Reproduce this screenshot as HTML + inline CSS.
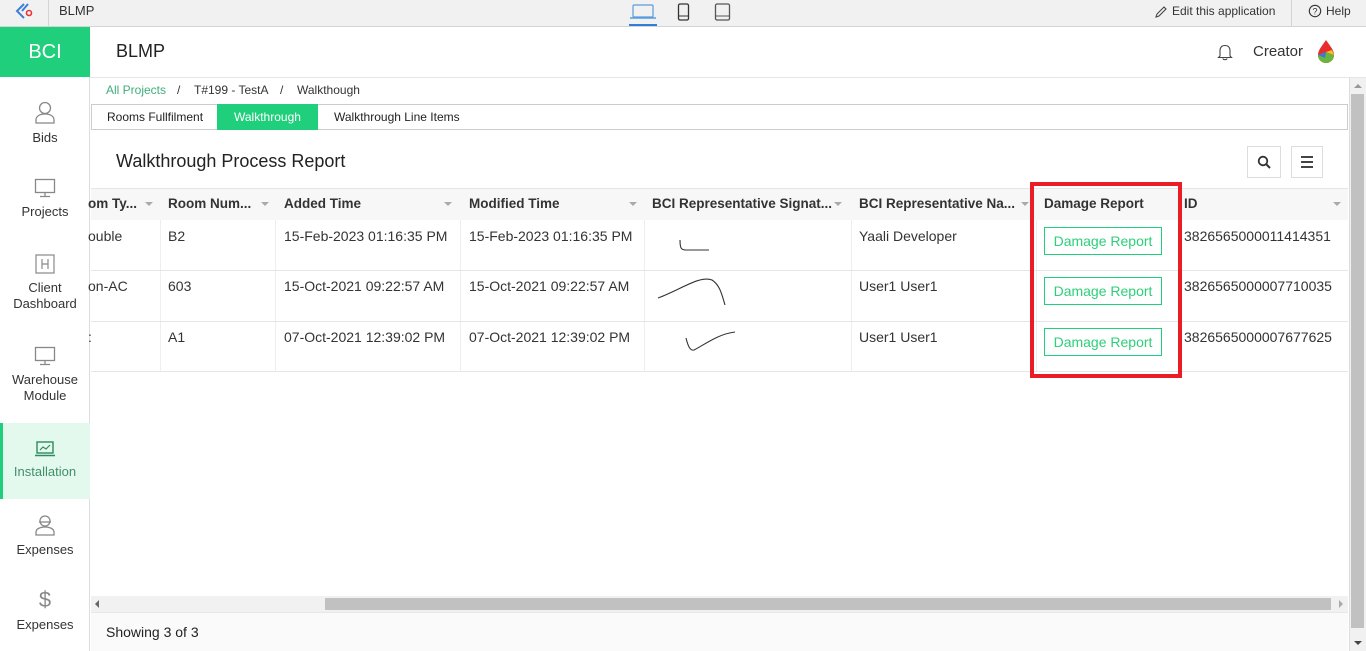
<!DOCTYPE html>
<html><head><meta charset="utf-8">
<style>
*{box-sizing:border-box;margin:0;padding:0}
body{width:1366px;height:651px;overflow:hidden;font-family:"Liberation Sans",sans-serif;background:#fff;position:relative;color:#222}
.abs{position:absolute}
.top{left:0;top:0;width:1366px;height:27px;background:#f1f1f1;border-bottom:1px solid #d4d4d4}
.side{left:0;top:27px;width:90px;height:624px;background:#fff;border-right:1px solid #ddd}
.bci{left:0;top:27px;width:90px;height:50px;background:#20cf7c;color:#fff;font-size:20px;text-align:center;line-height:50px}
.nav{position:absolute;left:0;width:90px;text-align:center;font-size:13px;color:#333;line-height:16px}
.nav svg{display:block;margin:0 auto 6px}
.hdr{left:90px;top:27px;width:1276px;height:51px;background:#fff;border-bottom:1px solid #e6e6e6}
.t{font-size:13px;white-space:nowrap;position:absolute}
.th{font-size:13.5px;color:#333;font-weight:bold;position:absolute;top:196px;white-space:nowrap}
.td{font-size:14px;color:#333;position:absolute;white-space:nowrap}
.arr{position:absolute;top:202px;width:0;height:0;border-left:4px solid transparent;border-right:4px solid transparent;border-top:4px solid #aaa}
.btn{position:absolute;left:1044px;width:118px;height:28px;border:1px solid #20cf7c;color:#2dcf7a;font-size:14px;text-align:center;line-height:26px;background:#fff}
.vl{position:absolute;top:220px;height:151px;width:1px;background:#eee}
.hl{position:absolute;left:91px;width:1257px;height:1px;background:#e6e6e6}
</style></head><body>
<div class="abs top"></div>
<svg class="abs" style="left:14px;top:2px" width="22" height="20" viewBox="0 0 22 20"><path d="M10 2 L3 9 L10 16" fill="none" stroke="#3d7fd8" stroke-width="2"/><path d="M14 2 L8 9" fill="none" stroke="#3d7fd8" stroke-width="2"/><circle cx="15" cy="11" r="2.5" fill="none" stroke="#e33" stroke-width="1.6"/></svg>
<div class="abs" style="left:48px;top:0;width:1px;height:26px;background:#d4d4d4"></div>
<div class="t" style="left:59px;top:3px;color:#333;font-size:13px">BLMP</div>
<svg class="abs" style="left:629px;top:4px" width="28" height="16" viewBox="0 0 28 16"><rect x="4" y="1" width="20" height="12" rx="1" fill="none" stroke="#5a9be0" stroke-width="1.2"/><path d="M1 14 H27" stroke="#5a9be0" stroke-width="1.5"/></svg>
<div class="abs" style="left:629px;top:24px;width:28px;height:2px;background:#2f7fd6"></div>
<svg class="abs" style="left:677px;top:3px" width="14" height="18"><rect x="1.5" y="1" width="10" height="16" rx="1.5" fill="none" stroke="#333" stroke-width="1.3"/><path d="M2 13 H11" stroke="#333"/></svg>
<svg class="abs" style="left:714px;top:3px" width="18" height="18"><rect x="1.5" y="1" width="14" height="16" rx="1.5" fill="none" stroke="#555" stroke-width="1.3"/><path d="M2 13 H15" stroke="#555"/></svg>
<svg class="abs" style="left:1154px;top:5px" width="14" height="14"><path d="M2 12 L3 9 L10 2 L12 4 L5 11 Z" fill="none" stroke="#444" stroke-width="1.1"/></svg>
<div class="t" style="left:1172px;top:4px;color:#333;font-size:12px">Edit this application</div>
<div class="abs" style="left:1291px;top:0;width:1px;height:26px;background:#d4d4d4"></div>
<svg class="abs" style="left:1308px;top:4px" width="14" height="14"><circle cx="7" cy="7" r="5.7" fill="none" stroke="#333" stroke-width="1.1"/><text x="7" y="10.5" font-size="9" text-anchor="middle" fill="#333" font-family="Liberation Sans">?</text></svg>
<div class="t" style="left:1326px;top:4px;color:#333;font-size:12px">Help</div>

<div class="abs side"></div>
<div class="abs bci">BCI</div>
<div class="nav" style="top:100px"><svg width="22" height="24" viewBox="0 0 22 24"><circle cx="11" cy="8" r="5.5" fill="none" stroke="#888" stroke-width="1.3"/><path d="M2 23 V20 C2 16 6 14 11 14 C16 14 20 16 20 20 V23 Z" fill="none" stroke="#888" stroke-width="1.3"/></svg>Bids</div>
<div class="nav" style="top:178px"><svg width="22" height="20"><rect x="1.5" y="1.5" width="19" height="13" fill="none" stroke="#888" stroke-width="1.3"/><path d="M11 14 V18 M6 18.5 H16" stroke="#888" stroke-width="1.3"/></svg>Projects</div>
<div class="nav" style="top:254px"><svg width="20" height="20"><rect x="1" y="1" width="18" height="18" fill="none" stroke="#888" stroke-width="1.2"/><path d="M7 5 V15 M13 5 V15 M7 10 H13" stroke="#888" stroke-width="1.2"/></svg>Client<br>Dashboard</div>
<div class="nav" style="top:346px"><svg width="22" height="20"><rect x="1.5" y="1.5" width="19" height="13" fill="none" stroke="#888" stroke-width="1.3"/><path d="M11 14 V18 M6 18.5 H16" stroke="#888" stroke-width="1.3"/></svg>Warehouse<br>Module</div>
<div class="abs" style="left:0;top:423px;width:90px;height:76px;background:#e4f9ee"></div>
<div class="abs" style="left:0;top:423px;width:3px;height:76px;background:#20cf7c"></div>
<div class="nav" style="top:440px;color:#3f8f6a"><svg width="22" height="18"><rect x="3" y="2" width="16" height="11" fill="none" stroke="#2f8a5c" stroke-width="1.4"/><path d="M1 15.5 H21" stroke="#2f8a5c" stroke-width="1.6"/><path d="M6 10 L9 7 L12 9 L16 5" fill="none" stroke="#2f8a5c" stroke-width="1.2"/></svg>Installation</div>
<div class="nav" style="top:514px"><svg width="22" height="22"><circle cx="11" cy="7" r="5" fill="none" stroke="#888" stroke-width="1.3"/><path d="M5 8 H17" stroke="#888" stroke-width="1.3"/><path d="M2 21 V18 C2 15 6 13 11 13 C16 13 20 15 20 18 V21 Z" fill="none" stroke="#888" stroke-width="1.3"/></svg>Expenses</div>
<div class="nav" style="top:589px"><div style="font-size:22px;color:#888;line-height:22px;margin-bottom:6px">$</div>Expenses</div>

<div class="abs hdr"></div>
<div class="t" style="left:116px;top:41px;font-size:18px;color:#222">BLMP</div>
<svg class="abs" style="left:1216px;top:43px" width="18" height="18"><path d="M4 13 V8 C4 4 6 2.5 9 2.5 C12 2.5 14 4 14 8 V13 L15.5 14.5 H2.5 Z M7 15.5 C7 17 11 17 11 15.5" fill="none" stroke="#444" stroke-width="1.1"/></svg>
<div class="t" style="left:1253px;top:43px;font-size:15px;color:#333">Creator</div>
<svg class="abs" style="left:1316px;top:39px" width="20" height="26" viewBox="0 0 20 26"><path d="M10 1 C6 7 2 11 2 16 C2 21 6 24 10 24 C14 24 18 21 18 16 C18 11 14 7 10 1Z" fill="#e82b2b"/><path d="M2 16 C2 21 6 24 10 24 C14 24 18 21 18 16 L10 13Z" fill="#6ab440"/><path d="M2 16 L10 13 L9 19 Z" fill="#3d79d1"/><path d="M10 13 L18 16 L16 11 Z" fill="#f5c02b"/></svg>

<div class="t" style="left:106px;top:83px;color:#3fae7b;font-size:12px">All Projects</div>
<div class="t" style="left:177px;top:83px;color:#333;font-size:12px">/</div>
<div class="t" style="left:194px;top:83px;color:#333;font-size:12px">T#199 - TestA</div>
<div class="t" style="left:280px;top:83px;color:#333;font-size:12px">/</div>
<div class="t" style="left:297px;top:83px;color:#333;font-size:12px">Walkthough</div>

<div class="abs" style="left:91px;top:104px;width:1257px;height:26px;border:1px solid #ccc;background:#fff"></div>
<div class="t" style="left:107px;top:110px;font-size:12px;color:#222">Rooms Fullfilment</div>
<div class="abs" style="left:217px;top:104px;width:101px;height:26px;background:#20cf7c"></div>
<div class="t" style="left:234px;top:110px;font-size:12px;color:#fff">Walkthrough</div>
<div class="t" style="left:334px;top:110px;font-size:12px;color:#222">Walkthrough Line Items</div>

<div class="t" style="left:116px;top:151px;font-size:18px;color:#222">Walkthrough Process Report</div>
<div class="abs" style="left:1247px;top:146px;width:34px;height:32px;border:1px solid #ddd"></div>
<svg class="abs" style="left:1257px;top:155px" width="14" height="14"><circle cx="6" cy="6" r="4.3" fill="none" stroke="#333" stroke-width="1.8"/><path d="M9 9 L13 13" stroke="#333" stroke-width="2"/></svg>
<div class="abs" style="left:1291px;top:146px;width:32px;height:32px;border:1px solid #ddd"></div>
<div class="abs" style="left:1301px;top:156px;width:12px;height:2px;background:#444"></div>
<div class="abs" style="left:1301px;top:161px;width:12px;height:2px;background:#444"></div>
<div class="abs" style="left:1301px;top:166px;width:12px;height:2px;background:#444"></div>

<div class="abs" style="left:91px;top:188px;width:1257px;height:32px;background:#f7f7f7;border-top:1px solid #e6e6e6"></div>
<div class="th" style="left:88px">om Ty...</div><div class="arr" style="left:145px"></div>
<div class="th" style="left:168px">Room Num...</div><div class="arr" style="left:261px"></div>
<div class="th" style="left:284px">Added Time</div><div class="arr" style="left:444px"></div>
<div class="th" style="left:469px">Modified Time</div><div class="arr" style="left:629px"></div>
<div class="th" style="left:652px">BCI Representative Signat...</div><div class="arr" style="left:834px"></div>
<div class="th" style="left:859px">BCI Representative Na...</div><div class="arr" style="left:1021px"></div>
<div class="th" style="left:1044px">Damage Report</div>
<div class="th" style="left:1184px">ID</div><div class="arr" style="left:1333px"></div>

<div class="vl" style="left:160px"></div><div class="vl" style="left:275px"></div><div class="vl" style="left:460px"></div><div class="vl" style="left:644px"></div><div class="vl" style="left:851px"></div><div class="vl" style="left:1036px"></div>
<div class="hl" style="top:270px"></div><div class="hl" style="top:321px"></div><div class="hl" style="top:371px"></div>

<div class="td" style="left:88px;top:228px">ouble</div>
<div class="td" style="left:168px;top:228px">B2</div>
<div class="td" style="left:284px;top:228px">15-Feb-2023 01:16:35 PM</div>
<div class="td" style="left:469px;top:228px">15-Feb-2023 01:16:35 PM</div>
<div class="td" style="left:859px;top:228px">Yaali Developer</div>
<div class="td" style="left:1184px;top:228px">3826565000011414351</div>
<div class="td" style="left:88px;top:278px">on-AC</div>
<div class="td" style="left:168px;top:278px">603</div>
<div class="td" style="left:284px;top:278px">15-Oct-2021 09:22:57 AM</div>
<div class="td" style="left:469px;top:278px">15-Oct-2021 09:22:57 AM</div>
<div class="td" style="left:859px;top:278px">User1 User1</div>
<div class="td" style="left:1184px;top:278px">3826565000007710035</div>
<div class="td" style="left:88px;top:329px">:</div>
<div class="td" style="left:168px;top:329px">A1</div>
<div class="td" style="left:284px;top:329px">07-Oct-2021 12:39:02 PM</div>
<div class="td" style="left:469px;top:329px">07-Oct-2021 12:39:02 PM</div>
<div class="td" style="left:859px;top:329px">User1 User1</div>
<div class="td" style="left:1184px;top:329px">3826565000007677625</div>

<svg class="abs" style="left:640px;top:220px" width="120" height="151"><path d="M40 20 C40 28 41 30 46 30 L69 30" fill="none" stroke="#333" stroke-width="1.1"/><path d="M18 78 C40 70 60 55 72 60 C80 65 82 75 85 85" fill="none" stroke="#333" stroke-width="1.1"/><path d="M46 118 C48 126 50 131 54 130 C64 125 78 114 95 112" fill="none" stroke="#333" stroke-width="1.1"/></svg>

<div class="btn" style="top:227px">Damage Report</div>
<div class="btn" style="top:277px">Damage Report</div>
<div class="btn" style="top:328px">Damage Report</div>
<div class="abs" style="left:1030px;top:182px;width:152px;height:196px;border:4px solid #e81d25"></div>

<div class="abs" style="left:91px;top:596px;width:1257px;height:16px;background:#f1f1f1"></div>
<div class="abs" style="left:325px;top:598px;width:1006px;height:12px;background:#c1c1c1"></div>
<div class="abs" style="left:95px;top:600px;border-top:4px solid transparent;border-bottom:4px solid transparent;border-right:4px solid #666"></div>
<div class="abs" style="left:1339px;top:600px;border-top:4px solid transparent;border-bottom:4px solid transparent;border-left:4px solid #aaa"></div>
<div class="abs" style="left:91px;top:612px;width:1257px;height:39px;background:#fafafa;border-top:1px solid #e8e8e8"></div>
<div class="t" style="left:106px;top:624px;font-size:14px;color:#222">Showing 3 of 3</div>

<div class="abs" style="left:1349px;top:78px;width:17px;height:573px;background:#f1f1f1;border-left:1px solid #ddd"></div>
<div class="abs" style="left:1351px;top:94px;width:13px;height:534px;background:#c1c1c1"></div>
<div class="abs" style="left:1354px;top:84px;border-left:4px solid transparent;border-right:4px solid transparent;border-bottom:4px solid #999"></div>
<div class="abs" style="left:1354px;top:641px;border-left:4px solid transparent;border-right:4px solid transparent;border-top:4px solid #444"></div>
</body></html>
